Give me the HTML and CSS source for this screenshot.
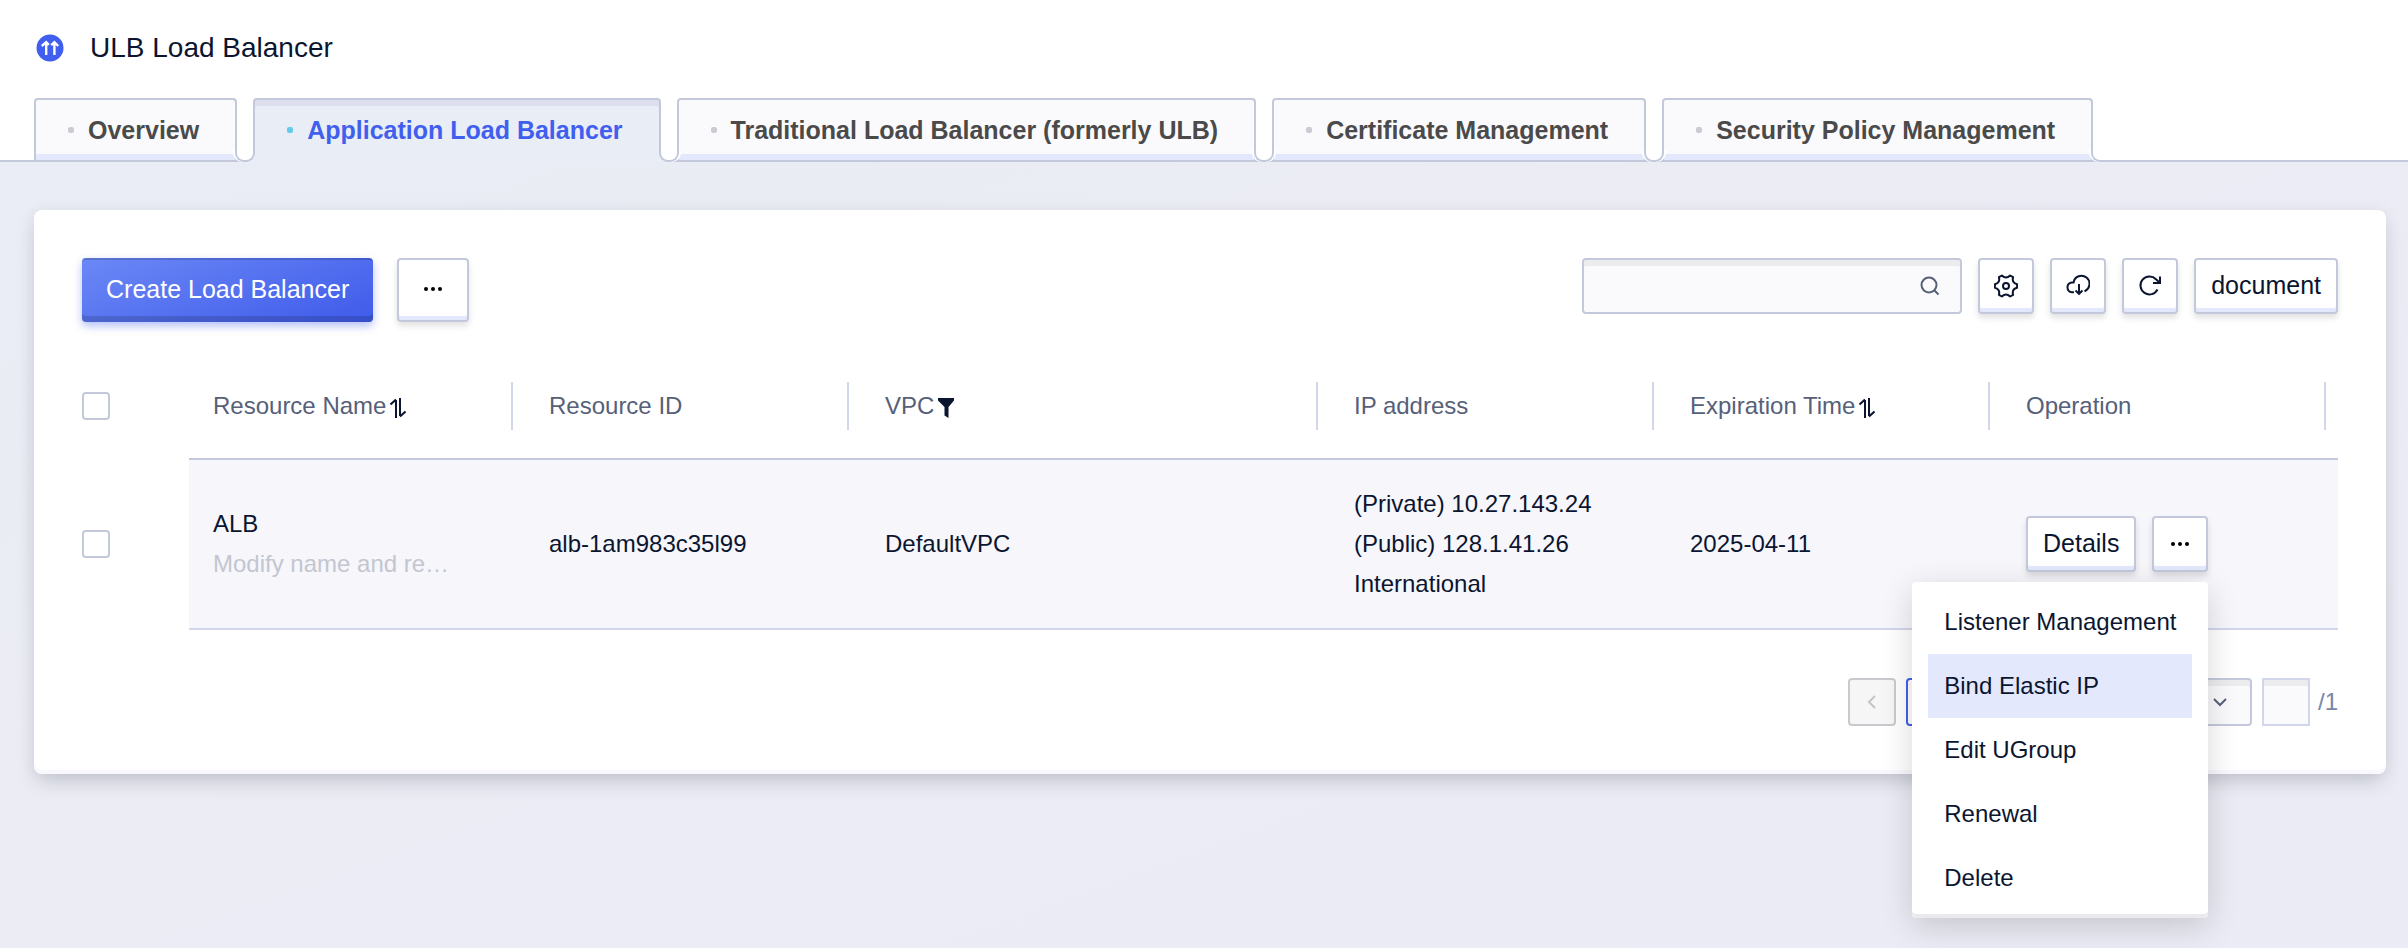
FILE: index.html
```html
<!DOCTYPE html>
<html lang="en">
<head>
    <meta charset="UTF-8">
    <meta name="viewport" content="width=device-width, initial-scale=1.0">
    <title>ULB Load Balancer</title>
    <link rel="stylesheet" href="styles.css">
</head>
<body>
    <header class="header">
        <div class="title">
            <svg class="logo" viewBox="0 0 28 28" width="28" height="28" aria-hidden="true">
                <circle cx="14" cy="14" r="13.5" fill="#415fee"/>
                <path d="M10.200 21V8.500M5.800 12l4.400-3.800 2.600 2.600M18.400 21V8.500M15.200 11.200l3.200-3 3.800 3.800" fill="none" stroke="#fff" stroke-width="2.400"/>
            </svg>
            <h1>ULB Load Balancer</h1>
        </div>
        <nav class="tabs">
            <a class="tab" href="#overview"><span class="dot"></span>Overview</a>
            <a class="tab active" href="#alb"><span class="dot"></span>Application Load Balancer</a>
            <a class="tab" href="#ulb"><span class="dot"></span>Traditional Load Balancer (formerly ULB)</a>
            <a class="tab" href="#certificate"><span class="dot"></span>Certificate Management</a>
            <a class="tab" href="#policy"><span class="dot"></span>Security Policy Management</a>
        </nav>
    </header>

    <main class="card">
        <div class="toolbar">
            <button class="btn-primary" type="button">Create Load Balancer</button>
            <button class="btn btn-large" type="button" aria-label="More">
                <svg viewBox="0 0 20 4" width="20" height="4"><circle cx="3" cy="2" r="2"/><circle cx="10" cy="2" r="2"/><circle cx="17" cy="2" r="2"/></svg>
            </button>
            <div class="tools">
                <label class="search">
                    <input type="text" aria-label="Search">
                    <svg viewBox="0 0 20 20" width="20" height="20" fill="none" stroke="#566079" stroke-width="2"><circle cx="9" cy="9" r="7.500"/><path d="M14 14l4.500 4.500"/></svg>
                </label>
                <button class="btn btn-icon" type="button" aria-label="Settings">
                    <svg viewBox="0 0 24 24" width="24" height="24" fill="none" stroke="#0b1530" stroke-width="2" stroke-linejoin="round"><circle cx="12" cy="12" r="3"/><path d="M7.900 1.500Q12 5.500 16.100 1.500L19.100 3.200Q17.600 8.700 23.100 10.200V13.800Q17.600 15.300 19.100 20.800L16.100 22.500Q12 18.500 7.900 22.500L4.900 20.800Q6.400 15.300.9 13.800V10.200Q6.400 8.700 4.900 3.200Z"/></svg>
                </button>
                <button class="btn btn-icon" type="button" aria-label="Download">
                    <svg viewBox="0 0 24 24" width="24" height="24" fill="none" stroke="#0b1530" stroke-width="2"><path d="M8 18.300H6A5 5 0 0 1 5.600 8.400H7.600A8 8 0 1 1 18.500 17.200M13 10v9.500M9.500 16.500l3.500 3.300 3.500-3.300"/></svg>
                </button>
                <button class="btn btn-icon" type="button" aria-label="Refresh">
                    <svg viewBox="0 0 24 24" width="24" height="24" fill="none" stroke="#0b1530" stroke-width="2"><path d="M19.500 15.500A9 9 0 1 1 18 5.200L21.500 8.500M22 2.500V9h-7"/></svg>
                </button>
                <button class="btn" type="button">document</button>
            </div>
        </div>

        <table class="table">
            <colgroup>
                <col class="col-check">
                <col class="col-base">
                <col class="col-base">
                <col>
                <col class="col-base">
                <col class="col-base">
                <col class="col-base">
            </colgroup>
            <thead>
                <tr>
                    <th class="check"><input type="checkbox" aria-label="Select all"></th>
                    <th>Resource Name<svg class="sort" viewBox="0 0 16 20" width="16" height="20"><path d="M6 20V2M.5 6.500L6 1.500M10 0v18M15.500 13.500L10 18.500"/></svg></th>
                    <th>Resource ID</th>
                    <th>VPC<svg class="filter" viewBox="0 0 16 20" width="16" height="20"><path d="M0 0h16v2.500L10.500 9v11l-4-2.500V9L0 2.500z"/></svg></th>
                    <th>IP address</th>
                    <th>Expiration Time<svg class="sort" viewBox="0 0 16 20" width="16" height="20"><path d="M6 20V2M.5 6.500L6 1.500M10 0v18M15.500 13.500L10 18.500"/></svg></th>
                    <th>Operation</th>
                </tr>
            </thead>
            <tbody>
                <tr>
                    <td class="check"><input type="checkbox" aria-label="Select ALB"></td>
                    <td>ALB<br><span class="remark">Modify name and re…</span></td>
                    <td>alb-1am983c35l99</td>
                    <td>DefaultVPC</td>
                    <td>(Private) 10.27.143.24<br>(Public) 128.1.41.26<br>International</td>
                    <td>2025-04-11</td>
                    <td>
                        <div class="actions">
                            <button class="btn" type="button">Details</button>
                            <div class="dropdown">
                                <button class="btn btn-icon" type="button" aria-label="More">
                                    <svg viewBox="0 0 20 4" width="20" height="4"><circle cx="3" cy="2" r="2"/><circle cx="10" cy="2" r="2"/><circle cx="17" cy="2" r="2"/></svg>
                                </button>
                                <div class="menu">
                                    <button type="button">Listener Management</button>
                                    <button type="button" class="hover">Bind Elastic IP</button>
                                    <button type="button">Edit UGroup</button>
                                    <button type="button">Renewal</button>
                                    <button type="button">Delete</button>
                                </div>
                            </div>
                        </div>
                    </td>
                </tr>
            </tbody>
        </table>

        <div class="pagination">
            <button class="page-btn" type="button" aria-label="Previous page" disabled>
                <svg viewBox="0 0 12 16" width="12" height="16" fill="none" stroke="#c3c5ca" stroke-width="2"><path d="M9 2L3 8l6 6"/></svg>
            </button>
            <button class="page-btn current" type="button" aria-label="Page 1"></button>
            <button class="page-btn" type="button" aria-label="Next page" disabled></button>
            <div class="page-size">
                <select aria-label="Page size"><option></option></select>
                <svg viewBox="0 0 16 12" width="16" height="12" fill="none" stroke="#566079" stroke-width="2"><path d="M2 3l6 6 6-6"/></svg>
            </div>
            <div class="page-jump">
                <input class="page-input" type="text" aria-label="Go to page">
                <span class="page-total">/1</span>
            </div>
        </div>
    </main>
</body>
</html>
```
FILE: styles.css
```css
* {
    box-sizing: border-box;
}
body {
    margin: 0;
    min-height: 100vh;
    background: linear-gradient(160deg, #e9edf5, #ebecf4 40%, #eaebf4);
    color: #0b1530;
    font-family: "Liberation Sans", Arial, sans-serif;
    font-size: 24px;
    line-height: 40px;
}
button, input, select {
    font-family: inherit;
    font-size: 24px;
    color: inherit;
    margin: 0;
}
button {
    cursor: pointer;
}

/* Header and tabs */
.header {
    background: #fff;
    border-bottom: 2px solid #c3c9da;
    padding: 28px 34px 0;
}
.title {
    display: flex;
    align-items: center;
    gap: 26px;
    padding: 0 2px 30px;
}
.title h1 {
    margin: 0;
    font-size: 28px;
    font-weight: normal;
}
.tabs {
    display: flex;
    gap: 16px;
}
.tab {
    position: relative;
    display: flex;
    align-items: center;
    height: 62px;
    padding: 0 36px 0 32px;
    border: 2px solid #c3c9da;
    border-bottom: none;
    border-radius: 4px 4px 0 0;
    background: #fafafc;
    box-shadow: inset 0 -6px 0 #e3e8fd;
    color: #4a4a4a;
    font-size: 25px;
    font-weight: bold;
    text-decoration: none;
    white-space: nowrap;
}
.dot {
    width: 6px;
    height: 6px;
    margin-right: 14px;
    border-radius: 2px;
    background: #c9ccd3;
}
/* rounded feet on both sides of a tab */
.tab::before, .tab::after {
    content: "";
    position: absolute;
    bottom: -2px;
    width: 10px;
    height: 10px;
    border-bottom: 2px solid #c3c9da;
    background: #fff;
}
.tab::before {
    right: 100%;
    border-right: 2px solid #c3c9da;
    border-bottom-right-radius: 9px;
    box-shadow: 2px 0 0 #fff;
}
.tab::after {
    left: 100%;
    border-left: 2px solid #c3c9da;
    border-bottom-left-radius: 9px;
    box-shadow: -2px 0 0 #fff;
}
.tab:first-child::before {
    display: none;
}
.tab.active {
    height: 64px;
    margin-bottom: -2px;
    padding-bottom: 2px;
    background: #e9edf5;
    box-shadow: inset 0 6px 0 #dddfee;
    color: #415fee;
}
.tab.active::before {
    bottom: 0;
    box-shadow: 3px 3px 0 #e9edf5;
}
.tab.active::after {
    bottom: 0;
    box-shadow: -3px 3px 0 #e9edf5;
}
.active .dot {
    background: #66cbe9;
}

/* Card */
.card {
    margin: 48px 22px 0 34px;
    padding: 48px;
    border-radius: 8px;
    background: #fff;
    box-shadow: inset 0 -4px 0 #f8f8fe, 0 10px 20px -4px rgba(50, 55, 70, 0.22), 0 0 16px rgba(50, 55, 70, 0.05);
}
.toolbar {
    display: flex;
    align-items: flex-start;
    gap: 24px;
    margin-bottom: 32px;
}
.tools {
    display: flex;
    gap: 16px;
    margin-left: auto;
}
.btn {
    display: flex;
    align-items: center;
    justify-content: center;
    height: 56px;
    padding: 0 15px 2px;
    border: 2px solid #c3c9da;
    border-radius: 4px;
    background: #fff;
    box-shadow: inset 0 -4px 0 #e3e8fd, 0 4px 6px rgba(0, 0, 0, 0.12);
    font-size: 25px;
}
.btn-icon {
    width: 56px;
    padding: 0;
}
.btn-large {
    width: 72px;
    height: 64px;
}
.btn-primary {
    height: 64px;
    padding: 0 24px 2px;
    border: none;
    border-radius: 4px;
    background: linear-gradient(160deg, #6b88f6, #3f5bea);
    box-shadow: inset 0 2px 0 rgba(0, 0, 0, 0.15), inset 0 -6px 0 rgba(0, 0, 0, 0.15), 0 4px 8px rgba(65, 95, 238, 0.4);
    color: #fff;
    font-size: 25px;
}
.search {
    display: flex;
    align-items: center;
    width: 380px;
    height: 56px;
    padding: 0 20px;
    border: 2px solid #c3c9da;
    border-radius: 4px;
    background: #fafafc;
    box-shadow: inset 0 6px 0 #ececee;
}
.search input {
    flex: 1;
    min-width: 0;
    border: none;
    background: none;
    outline: none;
}

/* Table */
.table {
    width: 100%;
    table-layout: fixed;
    border-collapse: separate;
    border-spacing: 0;
}
.col-check {
    width: 107px;
}
.col-base {
    width: 336px;
}
.table th {
    padding: 32px 24px;
    border-bottom: 2px solid #c3c9da;
    background: linear-gradient(#d2d6ea, #d2d6ea) no-repeat right 12px center / 2px 48px;
    color: #566079;
    font-weight: normal;
    text-align: left;
    white-space: nowrap;
}
.table td {
    padding: 24px;
    border-bottom: 2px solid #d2d6ea;
    background: #f6f6fb;
}
.table .check {
    padding: 0;
    border-bottom-color: transparent;
    background: none;
}
.check input {
    display: block;
    appearance: none;
    width: 28px;
    height: 28px;
    border: 2px solid #c3c9da;
    border-radius: 4px;
    background: #fff;
}
.remark {
    color: #c3c6d0;
}
.sort, .filter {
    margin-left: 4px;
    vertical-align: -4px;
}
.sort path {
    fill: none;
    stroke: #0b1530;
    stroke-width: 2;
}
.filter path {
    fill: #0b1530;
}
.actions {
    display: flex;
    gap: 16px;
}
.dropdown {
    position: relative;
}
.menu {
    position: absolute;
    top: 66px;
    right: 0;
    padding: 8px 16px;
    border-radius: 4px;
    background: #fff;
    box-shadow: inset 0 -4px 0 #eaeaec, 0 8px 32px rgba(0, 0, 0, 0.16);
    z-index: 2;
}
.menu button {
    display: block;
    width: 100%;
    height: 64px;
    padding: 0 16px;
    border: none;
    background: none;
    text-align: left;
    white-space: nowrap;
}
.menu .hover, .menu button:hover {
    background: #e3e8fd;
}

/* Pagination */
.pagination {
    display: flex;
    justify-content: flex-end;
    align-items: center;
    gap: 10px;
    margin-top: 48px;
}
.page-btn {
    display: flex;
    align-items: center;
    justify-content: center;
    width: 48px;
    height: 48px;
    padding: 0;
    border: 2px solid #c9cacd;
    border-radius: 4px;
    background: #f6f6f7;
}
.page-btn.current {
    border-color: #415fee;
    background: #fff;
}
.page-size {
    display: grid;
    align-items: center;
    width: 230px;
}
.page-size select, .page-size svg {
    grid-area: 1 / 1;
}
.page-size select {
    appearance: none;
    height: 48px;
    padding: 0 22px;
    border: 2px solid #c3c9da;
    border-radius: 4px;
    background: #fafafc;
    box-shadow: inset 0 6px 0 #ececee;
}
.page-size svg {
    justify-self: end;
    margin-right: 24px;
    pointer-events: none;
}
.page-jump {
    display: flex;
    align-items: center;
    gap: 8px;
}
.page-input {
    width: 48px;
    height: 48px;
    border: 2px solid #d2d6ea;
    background: #fafafc;
    box-shadow: inset 0 6px 0 #ececee;
}
.page-total {
    color: #7886a8;
}
```
